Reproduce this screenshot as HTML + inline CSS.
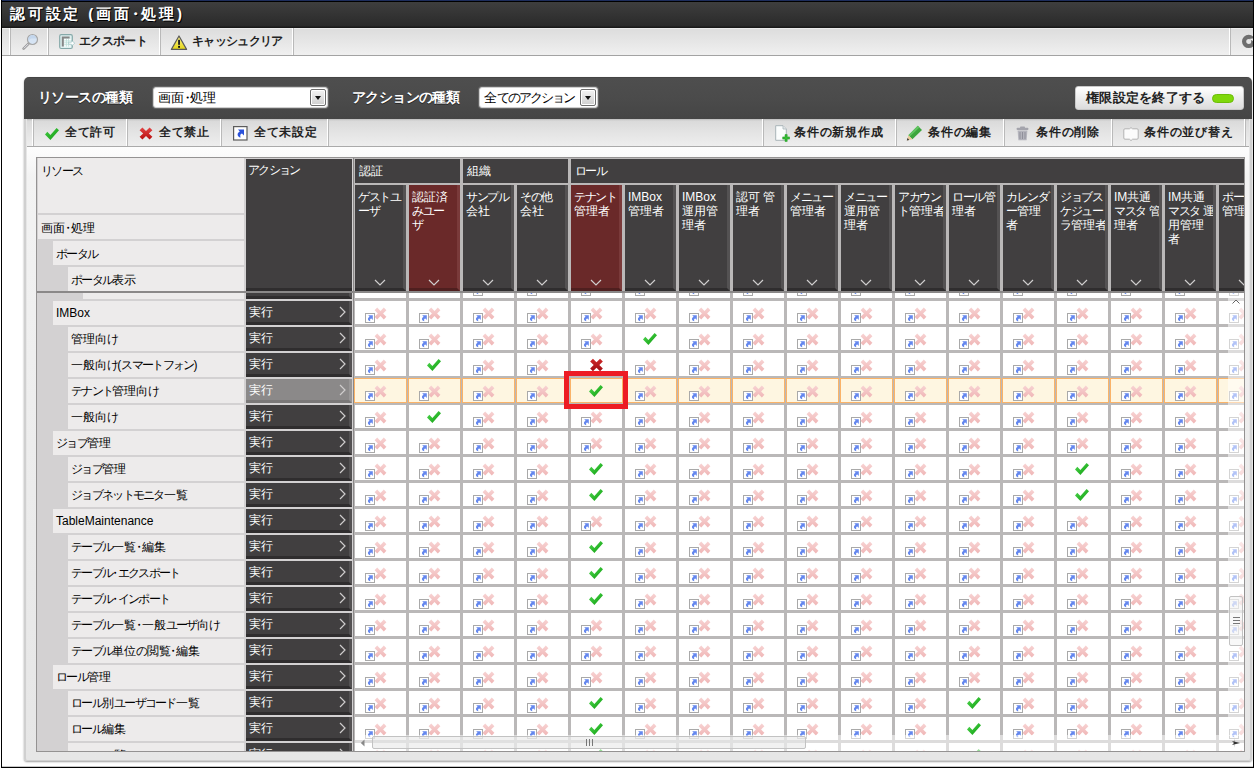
<!DOCTYPE html>
<html lang="ja"><head><meta charset="utf-8"><title>認可設定 (画面・処理)</title>
<style>
*{box-sizing:border-box;margin:0;padding:0}
html,body{width:1254px;height:768px;overflow:hidden;background:#fff}
body{font-family:"Liberation Sans",sans-serif;font-size:12px;color:#000;position:relative}
div,span,svg{position:absolute}
span.i,span.k,span.d{position:static}
span.d{margin:0 -.27em}
span.k{letter-spacing:-1.7px}
.b{letter-spacing:1px}
.b span.k{letter-spacing:-.7px}
#ptool .b span.k{letter-spacing:.4px}
.plabel span.k{letter-spacing:-.6px}
#endbtn span.k,#title span.k{letter-spacing:0}
.sel span.k{letter-spacing:-2px}
.ch span.k{letter-spacing:-1.3px}
#frame{left:0;top:0;width:1254px;height:768px}
#bl{left:1px;top:0;width:1px;height:768px;background:#000}
#bb{left:1px;top:766px;width:1253px;height:2px;background:linear-gradient(rgba(0,0,0,.22) 0,rgba(0,0,0,.22) 1px,#000 1px,#000 2px)}
#br{left:1253px;top:0;width:1px;height:768px;background:#000}
#titlebar{left:2px;top:0;width:1251px;height:28px;background:linear-gradient(#1d2d5c 0,#1d2d5c 1px,#000 1px,#000 2px,#3e3e3e 2px,#343434 14px,#2a2a2a 26px,#191919 27px,#191919 28px)}
#title{left:8px;top:4px;font-size:15px;letter-spacing:2.8px;font-weight:bold;color:#fff;white-space:nowrap;line-height:20px;text-shadow:1px 1px 0 #000;}
#toolbar{left:2px;top:28px;width:1251px;height:28px;background:linear-gradient(#f8f8f8 0,#dddddd 1px,#e6e6e6 50%,#f0f0f0 100%);border-bottom:1px solid #a3a3a3}
.tsep{top:0;width:2px;height:27px;background:#fff;border-right:1px solid #b9b9b9}
.tb{top:0;height:27px;line-height:27px;font-weight:bold;font-size:12px;white-space:nowrap;color:#222;overflow:hidden}
.tb svg{position:absolute}
/* panel */
#panel{left:24px;top:77px;width:1228px;height:684px;background:#e6e6e6;border-radius:5px 5px 3px 3px;box-shadow:0 1px 2px rgba(0,0,0,.38)}
#panel:after{content:'';position:absolute;left:0;top:42px;right:0;bottom:0;border:2px solid #d0d0d0;border-top:0;border-bottom-width:1px;border-radius:0 0 3px 3px;pointer-events:none}
#phead{left:0;top:0;width:1228px;height:42px;background:linear-gradient(#3c3c3c 0,#4e4e4e 1px,#4b4b4b 50%,#454545 100%);border-radius:5px 5px 0 0}
.plabel{top:0;height:41px;line-height:40px;color:#fff;font-weight:bold;font-size:14px;white-space:nowrap;text-shadow:0 1px 0 #222}
.sel{top:10px;height:21px;background:#fff;border:1px solid #cfcfcf;border-radius:3px;font-size:13px;line-height:19px;white-space:nowrap;overflow:hidden;box-shadow:0 0 0 1px #666}
.sel .t{left:4px;top:0}
.sel .dd{right:1px;top:1px;width:16px;height:17px;background:linear-gradient(#f4f4f4,#cfcfcf);border:1px solid #6c6c6c;border-radius:2px;box-shadow:inset 0 0 0 1px #fff}
.sel .dd:after{content:'';position:absolute;left:4px;top:6px;border:3.5px solid transparent;border-top:4px solid #111;border-bottom:0}
#endbtn{left:1051px;top:9px;width:169px;height:24px;border-radius:3px;background:linear-gradient(#ffffff,#dcdcdc);border:1px solid #c9c9c9;font-weight:bold;font-size:13px;letter-spacing:.3px;line-height:22px;color:#222;white-space:nowrap;overflow:hidden}
#endbtn .t{left:10px;top:0}
#endbtn .pill{left:136px;top:7px;width:22px;height:9px;border-radius:5px;background:#7fd80a;border:1px solid #6cbd08}
#ptool .tsep{height:27px}
#ptool .tb{height:27px;line-height:27px}
#ptool svg{margin-top:-.5px}
#ptool{left:3px;top:42px;width:1222px;height:28px;background:linear-gradient(#bdbdbd 0,#dadada 2px,#e4e4e4 50%,#eeeeee 100%);border-bottom:1px solid #aaa}
#pbody{left:3px;top:70px;width:1222px;height:611px;background:linear-gradient(#fdfdfd,#f3f3f3 30px,#e6e6e6 100%)}
/* grid */
#grid{left:36px;top:157px;width:1209px;height:595px;background:#bab8b8;overflow:hidden}
#grid:after{content:'';position:absolute;left:0;top:0;right:0;bottom:0;border:1px solid #949292;pointer-events:none}
#leftbg{left:1px;top:1px;width:209px;height:593px;background:#d3d1d2}
#actbg{left:208px;top:1px;width:110px;height:593px;background:#d3d1d2;border-right:1px solid #8a8888}
.rh{background:#edebeb;padding:6px 0 0 3px;white-space:nowrap;overflow:hidden;line-height:14px}
.ah{background:#413f40;color:#fff;padding:4px 0 0 2px;white-space:nowrap;overflow:hidden;line-height:14px;border-bottom:3px solid #2f2d2e}
.gh{top:2px;height:24px;background:#413f40;color:#fff;padding:5px 0 0 4px;line-height:14px;white-space:nowrap;overflow:hidden}
.ch{top:28px;width:51px;height:106px;background:#413f40;color:#fff;border-right:3px solid #545253;border-bottom:3px solid #2f2d2e;overflow:hidden}
.ch.red{background:#6a2929;border-right-color:#7a3a3a;border-bottom-color:#4f1f1f}
.ch span{left:3px;top:5px;width:60px;line-height:14px;white-space:nowrap}
.chev{left:19px;top:94px;width:12px;height:8px;fill:none;stroke:#d0cece;stroke-width:1.2}
#body{left:0;top:136px;width:1209px;height:459px;overflow:hidden}
#hline{left:0;top:134px;width:1209px;height:2px;background:#8a8888}
.rc{height:24px;background:#edebeb;line-height:24px;padding-left:3px;white-space:nowrap;overflow:hidden}
.ac{width:106px;height:24px;background:#413f40;color:#fff;line-height:23px;padding-left:3px;border-right:3px solid #545253;border-bottom:3px solid #2f2d2e;white-space:nowrap;overflow:hidden}
.ac.hl{background:#8b8989;border-right-color:#9a9898;border-bottom-color:#7a7878}
.gt{left:93px;top:5px;width:8px;height:12px;fill:none;stroke:#cfcdcd;stroke-width:1.2}
.c{width:51px;height:23px;background:#fff;overflow:hidden}
.c.hl{background:#fef6e1;box-shadow:inset 0 0 0 1px #fab368;margin:-1px 0 0 -1px;width:53px;height:25px}
.c.hl .sc,.c.hl .px,.c.hl .mk{margin:1px 0 0 1px}
.sc{left:10px;top:12px;width:10px;height:10px;overflow:visible}
.px{left:18.5px;top:5.5px;width:13px;height:13px;overflow:visible}
.mk{left:18px;top:5px;width:15px;height:14px;overflow:visible}
#redbox{left:564px;top:371px;width:64px;height:38px;border:5px solid #ed1c24}
#vsb{left:1192px;top:136px;width:16px;height:443px;background:rgba(255,255,255,.5)}
#vsb .up{left:4px;top:6px;width:8px;height:5px;fill:none;stroke:#666;stroke-width:1}
#vsb .thumb{left:1px;top:303px;width:14px;height:50px;border:1px solid #c2c2c2;border-radius:2px;background:rgba(240,240,240,.45)}
#vsb .gr{left:3px;top:20px;width:7px;height:7px;background:linear-gradient(#777 0,#777 1px,transparent 1px,transparent 3px,#777 3px,#777 4px,transparent 4px,transparent 6px,#777 6px,#777 7px)}
#hsb{left:319px;top:578px;width:873px;height:16px;background:rgba(255,255,255,.5)}
#hsb .lf{left:5px;top:4px;width:5px;height:8px;fill:#888}
#hsb .thumb{left:17px;top:1px;width:434px;height:13px;border:1px solid #c2c2c2;border-radius:2px;background:rgba(228,228,228,.5)}
#hsb .gr{left:213px;top:2px;width:7px;height:7px;background:linear-gradient(90deg,#777 0,#777 1px,transparent 1px,transparent 3px,#777 3px,#777 4px,transparent 4px,transparent 6px,#777 6px,#777 7px)}
#csb{left:1192px;top:578px;width:16px;height:16px;background:rgba(255,255,255,.5)}
#csb svg{left:3px;top:3px;width:10px;height:10px;fill:#333}

</style></head><body>
<svg width="0" height="0" style="position:absolute;left:-10px;top:-10px">
<defs>
<linearGradient id="gpx" x1="0" y1="0" x2="0" y2="1"><stop offset="0" stop-color="#f7d3d3"/><stop offset="1" stop-color="#f0b6b6"/></linearGradient>
<linearGradient id="gng" x1="0" y1="0" x2="0" y2="1"><stop offset="0" stop-color="#cf2a2a"/><stop offset="1" stop-color="#a00d12"/></linearGradient>
<linearGradient id="gok" x1="0" y1="0" x2="1" y2="1"><stop offset="0" stop-color="#58da58"/><stop offset=".55" stop-color="#2bb82b"/><stop offset="1" stop-color="#119411"/></linearGradient>
<symbol id="sc" viewBox="0 0 10 10" overflow="visible">
<rect x="0.5" y="0.5" width="9" height="9" fill="#fff" stroke="#a9a9a9"/>
<path d="M3.2 2.3 H7.8 V6.9 L6.4 5.6 C5.2 5.7 4.7 6.9 5.4 8.3 C2.5 7.9 2.1 4.8 4.6 3.7 Z" fill="#6487ee"/>
</symbol>
<symbol id="px" viewBox="0 0 13 13" overflow="visible">
<path d="M0.6 3.2 L3.2 0.6 L6.5 3.9 L9.8 0.6 L12.4 3.2 L9.1 6.5 L12.4 9.8 L9.8 12.4 L6.5 9.1 L3.2 12.4 L0.6 9.8 L3.9 6.5 Z" fill="url(#gpx)"/>
</symbol>
<symbol id="ng" viewBox="0 0 13 13" overflow="visible">
<path d="M0.6 3.2 L3.2 0.6 L6.5 3.9 L9.8 0.6 L12.4 3.2 L9.1 6.5 L12.4 9.8 L9.8 12.4 L6.5 9.1 L3.2 12.4 L0.6 9.8 L3.9 6.5 Z" fill="url(#gng)"/>
</symbol>
<symbol id="ok" viewBox="0 0 15 14" overflow="visible">
<path d="M0 7.5 L2.3 4.8 L5.4 7.9 L11.6 0.9 L14 3.2 L5.4 13 Z" fill="url(#gok)"/>
</symbol>
</defs>
</svg>
<div id="frame">
<div id="titlebar"><div id="title">認可設定 (画面<span class="d">・</span>処理)</div></div>
<div id="toolbar">
 <div class="tsep" style="left:7px"></div>
 <div class="tb b" style="left:10px;width:36px">
  <svg style="left:10px;top:5px" width="18" height="18" viewBox="0 0 18 18"><line x1="6.6" y1="10.6" x2="1.6" y2="15.6" stroke="#9c9c9c" stroke-width="2.6" stroke-linecap="round"/><line x1="6.4" y1="10.8" x2="1.8" y2="15.4" stroke="#e4e4ee" stroke-width="1"/><circle cx="10.5" cy="6.5" r="5" fill="#d6e4f4" stroke="#a6a6a6" stroke-width="1.2"/><path d="M6.2 7.5 A4.3 4.3 0 0 1 14.6 5.4 L9 5.6 Z" fill="#c3d6ec"/></svg>
 </div>
 <div class="tsep" style="left:45px"></div>
 <div class="tb b" style="left:48px;width:110px">
  <svg style="left:9px;top:6px" width="17" height="16" viewBox="0 0 17 16"><rect x="0.7" y="0.7" width="12.6" height="13.8" rx="1.5" fill="#dff0f0" stroke="#86a9a9" stroke-width="1.2"/><path d="M2.8 2.6 H10.6 V4.6 H4.8 V12.6 H2.8 Z" fill="#868686"/><path d="M5.2 5 H11.6 V12.6 H5.2 Z" fill="#fff"/><path d="M5.2 6.9 H11.6 M5.2 8.8 H11.6 M5.2 10.7 H11.6 M7.4 5 V12.6 M9.6 5 V12.6" stroke="#b9ddd8" stroke-width="0.8"/><path d="M9.6 8.2 H12.4 V6.4 L15.8 9.2 L12.4 12 V10.2 H9.6 Z" fill="#fff" stroke="#9fc4c4" stroke-width="0.7"/></svg>
  <span style="left:29px"><span class="k">エクスポート</span></span></div>
 <div class="tsep" style="left:157px"></div>
 <div class="tb b" style="left:160px;width:131px">
  <svg style="left:8px;top:7px" width="18" height="16" viewBox="0 0 18 16"><defs><linearGradient id="wg" x1="0" y1="0" x2="0" y2="1"><stop offset="0" stop-color="#fff68c"/><stop offset="1" stop-color="#e3d416"/></linearGradient></defs><path d="M9 1 L16.6 14.4 H1.4 Z" fill="url(#wg)" stroke="#5a5a5a" stroke-width="1.2" stroke-linejoin="round"/><rect x="8.1" y="4.8" width="1.9" height="5" fill="#222"/><rect x="8.1" y="10.9" width="1.9" height="1.9" fill="#111"/></svg>
  <span style="left:30px"><span class="k">キャッシュクリア</span></span></div>
 <div class="tsep" style="left:290px"></div>
 <div class="tsep" style="left:1227px"></div>
 <svg style="left:1239px;top:6px" width="14" height="15" viewBox="0 0 14 15"><circle cx="7.7" cy="7.4" r="4.6" fill="none" stroke="#6e6e6e" stroke-width="4.2"/><path d="M8 5 L14 4 L14 8 Z" fill="#ececec"/></svg>
</div>
<div id="bl"></div><div id="br"></div><div id="bb"></div>
<div id="panel">
 <div id="phead">
  <div class="plabel" style="left:14px"><span class="k">リソースの</span>種類</div>
  <div class="sel" style="left:129px;width:175px"><span class="t">画面<span class="d">・</span>処理</span><span class="dd"></span></div>
  <div class="plabel" style="left:328px"><span class="k">アクションの</span>種類</div>
  <div class="sel" style="left:455px;width:119px"><span class="t">全<span class="k">てのアクション</span></span><span class="dd"></span></div>
  <div id="endbtn"><span class="t">権限設定<span class="k">を</span>終了<span class="k">する</span></span><span class="pill"></span></div>
 </div>
 <div id="ptool">
  <div class="tsep" style="left:5px"></div>
  <div class="tb b" style="left:9px;width:92px">
   <svg style="left:9px;top:8px" width="15" height="13" viewBox="0 0 15 13"><defs><linearGradient id="gg" x1="0" y1="0" x2="1" y2="1"><stop offset="0" stop-color="#45cf45"/><stop offset="1" stop-color="#139a13"/></linearGradient></defs><path d="M0 7.5 L2.3 4.8 L5.4 7.9 L11.6 0.9 L14 3.2 L5.4 13 Z" fill="url(#gg)"/></svg>
   <span style="left:29px">全<span class="k">て</span>許可</span></div>
  <div class="tsep" style="left:99px"></div>
  <div class="tb b" style="left:103px;width:92px">
   <svg style="left:9px;top:8px" width="14" height="13" viewBox="0 0 14 13"><defs><linearGradient id="rg" x1="0" y1="0" x2="0" y2="1"><stop offset="0" stop-color="#e24444"/><stop offset="1" stop-color="#b80f0f"/></linearGradient></defs><path d="M0.6 3.2 L3.4 0.6 L7 3.9 L10.6 0.6 L13.4 3.2 L9.8 6.5 L13.4 9.8 L10.6 12.4 L7 9.1 L3.4 12.4 L0.6 9.8 L4.2 6.5 Z" fill="url(#rg)"/></svg>
   <span style="left:29px">全<span class="k">て</span>禁止</span></div>
  <div class="tsep" style="left:193px"></div>
  <div class="tb b" style="left:197px;width:104px">
   <svg style="left:9px;top:7px" width="15" height="15" viewBox="0 0 15 15"><rect x="0.6" y="0.6" width="13.4" height="13.4" fill="#fff" stroke="#5c5c5c" stroke-width="1.2"/><path d="M5 3.4 H11 V9.4 L9 7.6 C7.4 7.8 6.8 9.4 7.6 11.6 C4 10.8 3.6 6.8 6.8 5.4 Z" fill="#2b52db"/></svg>
   <span style="left:30px">全<span class="k">て</span>未設定</span></div>
  <div class="tsep" style="left:300px"></div>
  <div class="tsep" style="left:735px"></div>
  <div class="tb b" style="left:738px;width:132px">
   <svg style="left:10px;top:6px" width="16" height="17" viewBox="0 0 16 17"><path d="M0.7 0.7 H8 L11.3 4 V15.3 H0.7 Z" fill="#fbfdfd" stroke="#a9b4b8" stroke-width="1"/><path d="M8 0.7 V4 H11.3" fill="#e4eaec" stroke="#a9b4b8" stroke-width="0.8"/><path d="M10 9.6 H12.2 V11.9 H14.5 V14.1 H12.2 V16.4 H10 V14.1 H7.7 V11.9 H10 Z" fill="#35bb35" stroke="#1c951c" stroke-width="0.5"/></svg>
   <span style="left:29px">条件<span class="k">の</span>新規作成</span></div>
  <div class="tsep" style="left:868px"></div>
  <div class="tb b" style="left:871px;width:107px">
   <svg style="left:8px;top:6px" width="17" height="16" viewBox="0 0 17 16"><path d="M11.8 0.8 L16 5 L6.4 14.2 L2.4 10.2 Z" fill="#3da63d"/><path d="M11.8 0.8 L13.4 2.4 L3.8 11.6 L2.4 10.2 Z" fill="#62c462"/><path d="M2.4 10.2 L6.4 14.2 L0.8 15.6 Z" fill="#e9c99a"/><path d="M0.8 15.6 L1.5 13 L3.2 14.9 Z" fill="#333"/></svg>
   <span style="left:30px">条件<span class="k">の</span>編集</span></div>
  <div class="tsep" style="left:976px"></div>
  <div class="tb b" style="left:979px;width:107px">
   <svg style="left:10px;top:7px" width="13" height="15" viewBox="0 0 13 15"><rect x="4" y="0.4" width="5" height="2" rx="0.8" fill="#a4a4ac"/><rect x="0.6" y="1.8" width="11.8" height="2.2" rx="0.8" fill="#a4a4ac"/><path d="M1.6 4.6 H11.4 L10.6 14.2 H2.4 Z" fill="#b4b4bc"/><path d="M4 6 V13 M6.5 6 V13 M9 6 V13" stroke="#8c8c96" stroke-width="0.9"/></svg>
   <span style="left:30px">条件<span class="k">の</span>削除</span></div>
  <div class="tsep" style="left:1084px"></div>
  <div class="tb b" style="left:1087px;width:132px">
   <svg style="left:9px;top:8px" width="16" height="14" viewBox="0 0 16 14"><path d="M2 1.8 H6.4 L8 0.6 L9.6 1.8 H14 Q15.2 1.8 15.2 3 V11 Q15.2 12.2 14 12.2 H9.6 L8 13.6 L6.4 12.2 H2 Q0.8 12.2 0.8 11 V3 Q0.8 1.8 2 1.8 Z" fill="#fbfbfb" stroke="#b2b2b2" stroke-width="1"/></svg>
   <span style="left:30px">条件<span class="k">の</span>並<span class="k">び</span>替<span class="k">え</span></span></div>
  <div class="tsep" style="left:1217px"></div>
 </div>
 <div id="pbody"></div>
</div>
<div id="grid">
<div id="leftbg"></div><div id="actbg"></div>
<div class="rh" style="left:2px;top:1px;width:206px;height:55px"><span class="k">リソース</span></div>
<div class="rh" style="left:2px;top:58px;width:206px;height:24px">画面<span class="d">・</span>処理</div>
<div class="rh" style="left:17px;top:84px;width:191px;height:24px"><span class="k">ポータル</span></div>
<div class="rh" style="left:32px;top:110px;width:176px;height:24px"><span class="k">ポータル</span>表示</div>
<div class="ah" style="left:210px;top:2px;width:106px;height:132px"><span class="k">アクション</span></div>
<div class="gh" style="left:319px;width:105px">認証</div>
<div class="gh" style="left:427px;width:105px">組織</div>
<div class="gh" style="left:535px;width:680px"><span class="k">ロール</span></div>
<div class="ch" style="left:319px"><span><span class="k">ゲストユ</span><br><span class="k">ーザ</span></span><svg class="chev" viewBox="0 0 12 8"><path d="M1 1 L6 6 L11 1"/></svg></div>
<div class="ch red" style="left:373px"><span>認証済<br><span class="k">みユー</span><br><span class="k">ザ</span></span><svg class="chev" viewBox="0 0 12 8"><path d="M1 1 L6 6 L11 1"/></svg></div>
<div class="ch" style="left:427px"><span><span class="k">サンプル</span><br>会社</span><svg class="chev" viewBox="0 0 12 8"><path d="M1 1 L6 6 L11 1"/></svg></div>
<div class="ch" style="left:481px"><span><span class="k">その</span>他<br>会社</span><svg class="chev" viewBox="0 0 12 8"><path d="M1 1 L6 6 L11 1"/></svg></div>
<div class="ch red" style="left:535px"><span><span class="k">テナント</span><br>管理者</span><svg class="chev" viewBox="0 0 12 8"><path d="M1 1 L6 6 L11 1"/></svg></div>
<div class="ch" style="left:589px"><span>IMBox<br>管理者</span><svg class="chev" viewBox="0 0 12 8"><path d="M1 1 L6 6 L11 1"/></svg></div>
<div class="ch" style="left:643px"><span>IMBox<br>運用管<br>理者</span><svg class="chev" viewBox="0 0 12 8"><path d="M1 1 L6 6 L11 1"/></svg></div>
<div class="ch" style="left:697px"><span>認可 管<br>理者</span><svg class="chev" viewBox="0 0 12 8"><path d="M1 1 L6 6 L11 1"/></svg></div>
<div class="ch" style="left:751px"><span><span class="k">メニュー</span><br>管理者</span><svg class="chev" viewBox="0 0 12 8"><path d="M1 1 L6 6 L11 1"/></svg></div>
<div class="ch" style="left:805px"><span><span class="k">メニュー</span><br>運用管<br>理者</span><svg class="chev" viewBox="0 0 12 8"><path d="M1 1 L6 6 L11 1"/></svg></div>
<div class="ch" style="left:859px"><span><span class="k">アカウン</span><br><span class="k">ト</span>管理者</span><svg class="chev" viewBox="0 0 12 8"><path d="M1 1 L6 6 L11 1"/></svg></div>
<div class="ch" style="left:913px"><span><span class="k">ロール</span>管<br>理者</span><svg class="chev" viewBox="0 0 12 8"><path d="M1 1 L6 6 L11 1"/></svg></div>
<div class="ch" style="left:967px"><span><span class="k">カレンダ</span><br><span class="k">ー</span>管理<br>者</span><svg class="chev" viewBox="0 0 12 8"><path d="M1 1 L6 6 L11 1"/></svg></div>
<div class="ch" style="left:1021px"><span><span class="k">ジョブス</span><br><span class="k">ケジュー</span><br><span class="k">ラ</span>管理者</span><svg class="chev" viewBox="0 0 12 8"><path d="M1 1 L6 6 L11 1"/></svg></div>
<div class="ch" style="left:1075px"><span>IM共通<br><span class="k">マスタ</span> 管<br>理者</span><svg class="chev" viewBox="0 0 12 8"><path d="M1 1 L6 6 L11 1"/></svg></div>
<div class="ch" style="left:1129px"><span>IM共通<br><span class="k">マスタ</span> 運<br>用管理<br>者</span><svg class="chev" viewBox="0 0 12 8"><path d="M1 1 L6 6 L11 1"/></svg></div>
<div class="ch" style="left:1183px"><span><span class="k">ポー</span><br>管理</span><svg class="chev" viewBox="0 0 12 8"><path d="M1 1 L6 6 L11 1"/></svg></div>
<div id="hline"></div>
<div id="body">
<div class="tree-strip" style="left:2px;top:0;width:206px;height:6px"></div>
<div class="rc" style="left:47px;top:0;width:161px;height:6px"></div>
<div class="ac" style="left:210px;top:0;width:106px;height:6px"></div>
<div class="c" style="left:319px;top:0;height:5px"></div>
<div class="c" style="left:373px;top:0;height:5px"></div>
<div class="c" style="left:427px;top:0;height:5px"><svg class="sc" style="top:-7px"><use href="#sc"/></svg></div>
<div class="c" style="left:481px;top:0;height:5px"><svg class="sc" style="top:-7px"><use href="#sc"/></svg></div>
<div class="c" style="left:535px;top:0;height:5px"><svg class="sc" style="top:-7px"><use href="#sc"/></svg></div>
<div class="c" style="left:589px;top:0;height:5px"><svg class="sc" style="top:-7px"><use href="#sc"/></svg></div>
<div class="c" style="left:643px;top:0;height:5px"><svg class="sc" style="top:-7px"><use href="#sc"/></svg></div>
<div class="c" style="left:697px;top:0;height:5px"><svg class="sc" style="top:-7px"><use href="#sc"/></svg></div>
<div class="c" style="left:751px;top:0;height:5px"><svg class="sc" style="top:-7px"><use href="#sc"/></svg></div>
<div class="c" style="left:805px;top:0;height:5px"><svg class="sc" style="top:-7px"><use href="#sc"/></svg></div>
<div class="c" style="left:859px;top:0;height:5px"><svg class="sc" style="top:-7px"><use href="#sc"/></svg></div>
<div class="c" style="left:913px;top:0;height:5px"><svg class="sc" style="top:-7px"><use href="#sc"/></svg></div>
<div class="c" style="left:967px;top:0;height:5px"><svg class="sc" style="top:-7px"><use href="#sc"/></svg></div>
<div class="c" style="left:1021px;top:0;height:5px"><svg class="sc" style="top:-7px"><use href="#sc"/></svg></div>
<div class="c" style="left:1075px;top:0;height:5px"><svg class="sc" style="top:-7px"><use href="#sc"/></svg></div>
<div class="c" style="left:1129px;top:0;height:5px"><svg class="sc" style="top:-7px"><use href="#sc"/></svg></div>
<div class="c" style="left:1183px;top:0;height:5px"><svg class="sc" style="top:-7px"><use href="#sc"/></svg></div>
<div class="rc" style="left:17px;top:8px;width:191px">IMBox</div>
<div class="ac" style="left:210px;top:8px">実行<svg class="gt" viewBox="0 0 8 12"><path d="M1 1 L6 6 L1 11"/></svg></div>
<div class="c" style="left:319px;top:8px"><svg class="sc"><use href="#sc"/></svg><svg class="px"><use href="#px"/></svg></div>
<div class="c" style="left:373px;top:8px"><svg class="sc"><use href="#sc"/></svg><svg class="px"><use href="#px"/></svg></div>
<div class="c" style="left:427px;top:8px"><svg class="sc"><use href="#sc"/></svg><svg class="px"><use href="#px"/></svg></div>
<div class="c" style="left:481px;top:8px"><svg class="sc"><use href="#sc"/></svg><svg class="px"><use href="#px"/></svg></div>
<div class="c" style="left:535px;top:8px"><svg class="sc"><use href="#sc"/></svg><svg class="px"><use href="#px"/></svg></div>
<div class="c" style="left:589px;top:8px"><svg class="sc"><use href="#sc"/></svg><svg class="px"><use href="#px"/></svg></div>
<div class="c" style="left:643px;top:8px"><svg class="sc"><use href="#sc"/></svg><svg class="px"><use href="#px"/></svg></div>
<div class="c" style="left:697px;top:8px"><svg class="sc"><use href="#sc"/></svg><svg class="px"><use href="#px"/></svg></div>
<div class="c" style="left:751px;top:8px"><svg class="sc"><use href="#sc"/></svg><svg class="px"><use href="#px"/></svg></div>
<div class="c" style="left:805px;top:8px"><svg class="sc"><use href="#sc"/></svg><svg class="px"><use href="#px"/></svg></div>
<div class="c" style="left:859px;top:8px"><svg class="sc"><use href="#sc"/></svg><svg class="px"><use href="#px"/></svg></div>
<div class="c" style="left:913px;top:8px"><svg class="sc"><use href="#sc"/></svg><svg class="px"><use href="#px"/></svg></div>
<div class="c" style="left:967px;top:8px"><svg class="sc"><use href="#sc"/></svg><svg class="px"><use href="#px"/></svg></div>
<div class="c" style="left:1021px;top:8px"><svg class="sc"><use href="#sc"/></svg><svg class="px"><use href="#px"/></svg></div>
<div class="c" style="left:1075px;top:8px"><svg class="sc"><use href="#sc"/></svg><svg class="px"><use href="#px"/></svg></div>
<div class="c" style="left:1129px;top:8px"><svg class="sc"><use href="#sc"/></svg><svg class="px"><use href="#px"/></svg></div>
<div class="c" style="left:1183px;top:8px"><svg class="sc"><use href="#sc"/></svg><svg class="px"><use href="#px"/></svg></div>
<div class="rc" style="left:32px;top:34px;width:176px">管理向<span class="k">け</span></div>
<div class="ac" style="left:210px;top:34px">実行<svg class="gt" viewBox="0 0 8 12"><path d="M1 1 L6 6 L1 11"/></svg></div>
<div class="c" style="left:319px;top:34px"><svg class="sc"><use href="#sc"/></svg><svg class="px"><use href="#px"/></svg></div>
<div class="c" style="left:373px;top:34px"><svg class="sc"><use href="#sc"/></svg><svg class="px"><use href="#px"/></svg></div>
<div class="c" style="left:427px;top:34px"><svg class="sc"><use href="#sc"/></svg><svg class="px"><use href="#px"/></svg></div>
<div class="c" style="left:481px;top:34px"><svg class="sc"><use href="#sc"/></svg><svg class="px"><use href="#px"/></svg></div>
<div class="c" style="left:535px;top:34px"><svg class="sc"><use href="#sc"/></svg><svg class="px"><use href="#px"/></svg></div>
<div class="c" style="left:589px;top:34px"><svg class="mk"><use href="#ok"/></svg></div>
<div class="c" style="left:643px;top:34px"><svg class="sc"><use href="#sc"/></svg><svg class="px"><use href="#px"/></svg></div>
<div class="c" style="left:697px;top:34px"><svg class="sc"><use href="#sc"/></svg><svg class="px"><use href="#px"/></svg></div>
<div class="c" style="left:751px;top:34px"><svg class="sc"><use href="#sc"/></svg><svg class="px"><use href="#px"/></svg></div>
<div class="c" style="left:805px;top:34px"><svg class="sc"><use href="#sc"/></svg><svg class="px"><use href="#px"/></svg></div>
<div class="c" style="left:859px;top:34px"><svg class="sc"><use href="#sc"/></svg><svg class="px"><use href="#px"/></svg></div>
<div class="c" style="left:913px;top:34px"><svg class="sc"><use href="#sc"/></svg><svg class="px"><use href="#px"/></svg></div>
<div class="c" style="left:967px;top:34px"><svg class="sc"><use href="#sc"/></svg><svg class="px"><use href="#px"/></svg></div>
<div class="c" style="left:1021px;top:34px"><svg class="sc"><use href="#sc"/></svg><svg class="px"><use href="#px"/></svg></div>
<div class="c" style="left:1075px;top:34px"><svg class="sc"><use href="#sc"/></svg><svg class="px"><use href="#px"/></svg></div>
<div class="c" style="left:1129px;top:34px"><svg class="sc"><use href="#sc"/></svg><svg class="px"><use href="#px"/></svg></div>
<div class="c" style="left:1183px;top:34px"><svg class="sc"><use href="#sc"/></svg><svg class="px"><use href="#px"/></svg></div>
<div class="rc" style="left:32px;top:60px;width:176px">一般向<span class="k">け</span>(<span class="k">スマートフォン</span>)</div>
<div class="ac" style="left:210px;top:60px">実行<svg class="gt" viewBox="0 0 8 12"><path d="M1 1 L6 6 L1 11"/></svg></div>
<div class="c" style="left:319px;top:60px"><svg class="sc"><use href="#sc"/></svg><svg class="px"><use href="#px"/></svg></div>
<div class="c" style="left:373px;top:60px"><svg class="mk"><use href="#ok"/></svg></div>
<div class="c" style="left:427px;top:60px"><svg class="sc"><use href="#sc"/></svg><svg class="px"><use href="#px"/></svg></div>
<div class="c" style="left:481px;top:60px"><svg class="sc"><use href="#sc"/></svg><svg class="px"><use href="#px"/></svg></div>
<div class="c" style="left:535px;top:60px"><svg class="mk"><use href="#ng"/></svg></div>
<div class="c" style="left:589px;top:60px"><svg class="sc"><use href="#sc"/></svg><svg class="px"><use href="#px"/></svg></div>
<div class="c" style="left:643px;top:60px"><svg class="sc"><use href="#sc"/></svg><svg class="px"><use href="#px"/></svg></div>
<div class="c" style="left:697px;top:60px"><svg class="sc"><use href="#sc"/></svg><svg class="px"><use href="#px"/></svg></div>
<div class="c" style="left:751px;top:60px"><svg class="sc"><use href="#sc"/></svg><svg class="px"><use href="#px"/></svg></div>
<div class="c" style="left:805px;top:60px"><svg class="sc"><use href="#sc"/></svg><svg class="px"><use href="#px"/></svg></div>
<div class="c" style="left:859px;top:60px"><svg class="sc"><use href="#sc"/></svg><svg class="px"><use href="#px"/></svg></div>
<div class="c" style="left:913px;top:60px"><svg class="sc"><use href="#sc"/></svg><svg class="px"><use href="#px"/></svg></div>
<div class="c" style="left:967px;top:60px"><svg class="sc"><use href="#sc"/></svg><svg class="px"><use href="#px"/></svg></div>
<div class="c" style="left:1021px;top:60px"><svg class="sc"><use href="#sc"/></svg><svg class="px"><use href="#px"/></svg></div>
<div class="c" style="left:1075px;top:60px"><svg class="sc"><use href="#sc"/></svg><svg class="px"><use href="#px"/></svg></div>
<div class="c" style="left:1129px;top:60px"><svg class="sc"><use href="#sc"/></svg><svg class="px"><use href="#px"/></svg></div>
<div class="c" style="left:1183px;top:60px"><svg class="sc"><use href="#sc"/></svg><svg class="px"><use href="#px"/></svg></div>
<div class="rc" style="left:32px;top:86px;width:176px"><span class="k">テナント</span>管理向<span class="k">け</span></div>
<div class="ac hl" style="left:210px;top:86px">実行<svg class="gt" viewBox="0 0 8 12"><path d="M1 1 L6 6 L1 11"/></svg></div>
<div class="c hl" style="left:319px;top:86px"><svg class="sc"><use href="#sc"/></svg><svg class="px"><use href="#px"/></svg></div>
<div class="c hl" style="left:373px;top:86px"><svg class="sc"><use href="#sc"/></svg><svg class="px"><use href="#px"/></svg></div>
<div class="c hl" style="left:427px;top:86px"><svg class="sc"><use href="#sc"/></svg><svg class="px"><use href="#px"/></svg></div>
<div class="c hl" style="left:481px;top:86px"><svg class="sc"><use href="#sc"/></svg><svg class="px"><use href="#px"/></svg></div>
<div class="c hl" style="left:535px;top:86px"><svg class="mk"><use href="#ok"/></svg></div>
<div class="c hl" style="left:589px;top:86px"><svg class="sc"><use href="#sc"/></svg><svg class="px"><use href="#px"/></svg></div>
<div class="c hl" style="left:643px;top:86px"><svg class="sc"><use href="#sc"/></svg><svg class="px"><use href="#px"/></svg></div>
<div class="c hl" style="left:697px;top:86px"><svg class="sc"><use href="#sc"/></svg><svg class="px"><use href="#px"/></svg></div>
<div class="c hl" style="left:751px;top:86px"><svg class="sc"><use href="#sc"/></svg><svg class="px"><use href="#px"/></svg></div>
<div class="c hl" style="left:805px;top:86px"><svg class="sc"><use href="#sc"/></svg><svg class="px"><use href="#px"/></svg></div>
<div class="c hl" style="left:859px;top:86px"><svg class="sc"><use href="#sc"/></svg><svg class="px"><use href="#px"/></svg></div>
<div class="c hl" style="left:913px;top:86px"><svg class="sc"><use href="#sc"/></svg><svg class="px"><use href="#px"/></svg></div>
<div class="c hl" style="left:967px;top:86px"><svg class="sc"><use href="#sc"/></svg><svg class="px"><use href="#px"/></svg></div>
<div class="c hl" style="left:1021px;top:86px"><svg class="sc"><use href="#sc"/></svg><svg class="px"><use href="#px"/></svg></div>
<div class="c hl" style="left:1075px;top:86px"><svg class="sc"><use href="#sc"/></svg><svg class="px"><use href="#px"/></svg></div>
<div class="c hl" style="left:1129px;top:86px"><svg class="sc"><use href="#sc"/></svg><svg class="px"><use href="#px"/></svg></div>
<div class="c hl" style="left:1183px;top:86px"><svg class="sc"><use href="#sc"/></svg><svg class="px"><use href="#px"/></svg></div>
<div class="rc" style="left:32px;top:112px;width:176px">一般向<span class="k">け</span></div>
<div class="ac" style="left:210px;top:112px">実行<svg class="gt" viewBox="0 0 8 12"><path d="M1 1 L6 6 L1 11"/></svg></div>
<div class="c" style="left:319px;top:112px"><svg class="sc"><use href="#sc"/></svg><svg class="px"><use href="#px"/></svg></div>
<div class="c" style="left:373px;top:112px"><svg class="mk"><use href="#ok"/></svg></div>
<div class="c" style="left:427px;top:112px"><svg class="sc"><use href="#sc"/></svg><svg class="px"><use href="#px"/></svg></div>
<div class="c" style="left:481px;top:112px"><svg class="sc"><use href="#sc"/></svg><svg class="px"><use href="#px"/></svg></div>
<div class="c" style="left:535px;top:112px"><svg class="sc"><use href="#sc"/></svg><svg class="px"><use href="#px"/></svg></div>
<div class="c" style="left:589px;top:112px"><svg class="sc"><use href="#sc"/></svg><svg class="px"><use href="#px"/></svg></div>
<div class="c" style="left:643px;top:112px"><svg class="sc"><use href="#sc"/></svg><svg class="px"><use href="#px"/></svg></div>
<div class="c" style="left:697px;top:112px"><svg class="sc"><use href="#sc"/></svg><svg class="px"><use href="#px"/></svg></div>
<div class="c" style="left:751px;top:112px"><svg class="sc"><use href="#sc"/></svg><svg class="px"><use href="#px"/></svg></div>
<div class="c" style="left:805px;top:112px"><svg class="sc"><use href="#sc"/></svg><svg class="px"><use href="#px"/></svg></div>
<div class="c" style="left:859px;top:112px"><svg class="sc"><use href="#sc"/></svg><svg class="px"><use href="#px"/></svg></div>
<div class="c" style="left:913px;top:112px"><svg class="sc"><use href="#sc"/></svg><svg class="px"><use href="#px"/></svg></div>
<div class="c" style="left:967px;top:112px"><svg class="sc"><use href="#sc"/></svg><svg class="px"><use href="#px"/></svg></div>
<div class="c" style="left:1021px;top:112px"><svg class="sc"><use href="#sc"/></svg><svg class="px"><use href="#px"/></svg></div>
<div class="c" style="left:1075px;top:112px"><svg class="sc"><use href="#sc"/></svg><svg class="px"><use href="#px"/></svg></div>
<div class="c" style="left:1129px;top:112px"><svg class="sc"><use href="#sc"/></svg><svg class="px"><use href="#px"/></svg></div>
<div class="c" style="left:1183px;top:112px"><svg class="sc"><use href="#sc"/></svg><svg class="px"><use href="#px"/></svg></div>
<div class="rc" style="left:17px;top:138px;width:191px"><span class="k">ジョブ</span>管理</div>
<div class="ac" style="left:210px;top:138px">実行<svg class="gt" viewBox="0 0 8 12"><path d="M1 1 L6 6 L1 11"/></svg></div>
<div class="c" style="left:319px;top:138px"><svg class="sc"><use href="#sc"/></svg><svg class="px"><use href="#px"/></svg></div>
<div class="c" style="left:373px;top:138px"><svg class="sc"><use href="#sc"/></svg><svg class="px"><use href="#px"/></svg></div>
<div class="c" style="left:427px;top:138px"><svg class="sc"><use href="#sc"/></svg><svg class="px"><use href="#px"/></svg></div>
<div class="c" style="left:481px;top:138px"><svg class="sc"><use href="#sc"/></svg><svg class="px"><use href="#px"/></svg></div>
<div class="c" style="left:535px;top:138px"><svg class="sc"><use href="#sc"/></svg><svg class="px"><use href="#px"/></svg></div>
<div class="c" style="left:589px;top:138px"><svg class="sc"><use href="#sc"/></svg><svg class="px"><use href="#px"/></svg></div>
<div class="c" style="left:643px;top:138px"><svg class="sc"><use href="#sc"/></svg><svg class="px"><use href="#px"/></svg></div>
<div class="c" style="left:697px;top:138px"><svg class="sc"><use href="#sc"/></svg><svg class="px"><use href="#px"/></svg></div>
<div class="c" style="left:751px;top:138px"><svg class="sc"><use href="#sc"/></svg><svg class="px"><use href="#px"/></svg></div>
<div class="c" style="left:805px;top:138px"><svg class="sc"><use href="#sc"/></svg><svg class="px"><use href="#px"/></svg></div>
<div class="c" style="left:859px;top:138px"><svg class="sc"><use href="#sc"/></svg><svg class="px"><use href="#px"/></svg></div>
<div class="c" style="left:913px;top:138px"><svg class="sc"><use href="#sc"/></svg><svg class="px"><use href="#px"/></svg></div>
<div class="c" style="left:967px;top:138px"><svg class="sc"><use href="#sc"/></svg><svg class="px"><use href="#px"/></svg></div>
<div class="c" style="left:1021px;top:138px"><svg class="sc"><use href="#sc"/></svg><svg class="px"><use href="#px"/></svg></div>
<div class="c" style="left:1075px;top:138px"><svg class="sc"><use href="#sc"/></svg><svg class="px"><use href="#px"/></svg></div>
<div class="c" style="left:1129px;top:138px"><svg class="sc"><use href="#sc"/></svg><svg class="px"><use href="#px"/></svg></div>
<div class="c" style="left:1183px;top:138px"><svg class="sc"><use href="#sc"/></svg><svg class="px"><use href="#px"/></svg></div>
<div class="rc" style="left:32px;top:164px;width:176px"><span class="k">ジョブ</span>管理</div>
<div class="ac" style="left:210px;top:164px">実行<svg class="gt" viewBox="0 0 8 12"><path d="M1 1 L6 6 L1 11"/></svg></div>
<div class="c" style="left:319px;top:164px"><svg class="sc"><use href="#sc"/></svg><svg class="px"><use href="#px"/></svg></div>
<div class="c" style="left:373px;top:164px"><svg class="sc"><use href="#sc"/></svg><svg class="px"><use href="#px"/></svg></div>
<div class="c" style="left:427px;top:164px"><svg class="sc"><use href="#sc"/></svg><svg class="px"><use href="#px"/></svg></div>
<div class="c" style="left:481px;top:164px"><svg class="sc"><use href="#sc"/></svg><svg class="px"><use href="#px"/></svg></div>
<div class="c" style="left:535px;top:164px"><svg class="mk"><use href="#ok"/></svg></div>
<div class="c" style="left:589px;top:164px"><svg class="sc"><use href="#sc"/></svg><svg class="px"><use href="#px"/></svg></div>
<div class="c" style="left:643px;top:164px"><svg class="sc"><use href="#sc"/></svg><svg class="px"><use href="#px"/></svg></div>
<div class="c" style="left:697px;top:164px"><svg class="sc"><use href="#sc"/></svg><svg class="px"><use href="#px"/></svg></div>
<div class="c" style="left:751px;top:164px"><svg class="sc"><use href="#sc"/></svg><svg class="px"><use href="#px"/></svg></div>
<div class="c" style="left:805px;top:164px"><svg class="sc"><use href="#sc"/></svg><svg class="px"><use href="#px"/></svg></div>
<div class="c" style="left:859px;top:164px"><svg class="sc"><use href="#sc"/></svg><svg class="px"><use href="#px"/></svg></div>
<div class="c" style="left:913px;top:164px"><svg class="sc"><use href="#sc"/></svg><svg class="px"><use href="#px"/></svg></div>
<div class="c" style="left:967px;top:164px"><svg class="sc"><use href="#sc"/></svg><svg class="px"><use href="#px"/></svg></div>
<div class="c" style="left:1021px;top:164px"><svg class="mk"><use href="#ok"/></svg></div>
<div class="c" style="left:1075px;top:164px"><svg class="sc"><use href="#sc"/></svg><svg class="px"><use href="#px"/></svg></div>
<div class="c" style="left:1129px;top:164px"><svg class="sc"><use href="#sc"/></svg><svg class="px"><use href="#px"/></svg></div>
<div class="c" style="left:1183px;top:164px"><svg class="sc"><use href="#sc"/></svg><svg class="px"><use href="#px"/></svg></div>
<div class="rc" style="left:32px;top:190px;width:176px"><span class="k">ジョブネットモニタ</span>一覧</div>
<div class="ac" style="left:210px;top:190px">実行<svg class="gt" viewBox="0 0 8 12"><path d="M1 1 L6 6 L1 11"/></svg></div>
<div class="c" style="left:319px;top:190px"><svg class="sc"><use href="#sc"/></svg><svg class="px"><use href="#px"/></svg></div>
<div class="c" style="left:373px;top:190px"><svg class="sc"><use href="#sc"/></svg><svg class="px"><use href="#px"/></svg></div>
<div class="c" style="left:427px;top:190px"><svg class="sc"><use href="#sc"/></svg><svg class="px"><use href="#px"/></svg></div>
<div class="c" style="left:481px;top:190px"><svg class="sc"><use href="#sc"/></svg><svg class="px"><use href="#px"/></svg></div>
<div class="c" style="left:535px;top:190px"><svg class="mk"><use href="#ok"/></svg></div>
<div class="c" style="left:589px;top:190px"><svg class="sc"><use href="#sc"/></svg><svg class="px"><use href="#px"/></svg></div>
<div class="c" style="left:643px;top:190px"><svg class="sc"><use href="#sc"/></svg><svg class="px"><use href="#px"/></svg></div>
<div class="c" style="left:697px;top:190px"><svg class="sc"><use href="#sc"/></svg><svg class="px"><use href="#px"/></svg></div>
<div class="c" style="left:751px;top:190px"><svg class="sc"><use href="#sc"/></svg><svg class="px"><use href="#px"/></svg></div>
<div class="c" style="left:805px;top:190px"><svg class="sc"><use href="#sc"/></svg><svg class="px"><use href="#px"/></svg></div>
<div class="c" style="left:859px;top:190px"><svg class="sc"><use href="#sc"/></svg><svg class="px"><use href="#px"/></svg></div>
<div class="c" style="left:913px;top:190px"><svg class="sc"><use href="#sc"/></svg><svg class="px"><use href="#px"/></svg></div>
<div class="c" style="left:967px;top:190px"><svg class="sc"><use href="#sc"/></svg><svg class="px"><use href="#px"/></svg></div>
<div class="c" style="left:1021px;top:190px"><svg class="mk"><use href="#ok"/></svg></div>
<div class="c" style="left:1075px;top:190px"><svg class="sc"><use href="#sc"/></svg><svg class="px"><use href="#px"/></svg></div>
<div class="c" style="left:1129px;top:190px"><svg class="sc"><use href="#sc"/></svg><svg class="px"><use href="#px"/></svg></div>
<div class="c" style="left:1183px;top:190px"><svg class="sc"><use href="#sc"/></svg><svg class="px"><use href="#px"/></svg></div>
<div class="rc" style="left:17px;top:216px;width:191px">TableMaintenance</div>
<div class="ac" style="left:210px;top:216px">実行<svg class="gt" viewBox="0 0 8 12"><path d="M1 1 L6 6 L1 11"/></svg></div>
<div class="c" style="left:319px;top:216px"><svg class="sc"><use href="#sc"/></svg><svg class="px"><use href="#px"/></svg></div>
<div class="c" style="left:373px;top:216px"><svg class="sc"><use href="#sc"/></svg><svg class="px"><use href="#px"/></svg></div>
<div class="c" style="left:427px;top:216px"><svg class="sc"><use href="#sc"/></svg><svg class="px"><use href="#px"/></svg></div>
<div class="c" style="left:481px;top:216px"><svg class="sc"><use href="#sc"/></svg><svg class="px"><use href="#px"/></svg></div>
<div class="c" style="left:535px;top:216px"><svg class="sc"><use href="#sc"/></svg><svg class="px"><use href="#px"/></svg></div>
<div class="c" style="left:589px;top:216px"><svg class="sc"><use href="#sc"/></svg><svg class="px"><use href="#px"/></svg></div>
<div class="c" style="left:643px;top:216px"><svg class="sc"><use href="#sc"/></svg><svg class="px"><use href="#px"/></svg></div>
<div class="c" style="left:697px;top:216px"><svg class="sc"><use href="#sc"/></svg><svg class="px"><use href="#px"/></svg></div>
<div class="c" style="left:751px;top:216px"><svg class="sc"><use href="#sc"/></svg><svg class="px"><use href="#px"/></svg></div>
<div class="c" style="left:805px;top:216px"><svg class="sc"><use href="#sc"/></svg><svg class="px"><use href="#px"/></svg></div>
<div class="c" style="left:859px;top:216px"><svg class="sc"><use href="#sc"/></svg><svg class="px"><use href="#px"/></svg></div>
<div class="c" style="left:913px;top:216px"><svg class="sc"><use href="#sc"/></svg><svg class="px"><use href="#px"/></svg></div>
<div class="c" style="left:967px;top:216px"><svg class="sc"><use href="#sc"/></svg><svg class="px"><use href="#px"/></svg></div>
<div class="c" style="left:1021px;top:216px"><svg class="sc"><use href="#sc"/></svg><svg class="px"><use href="#px"/></svg></div>
<div class="c" style="left:1075px;top:216px"><svg class="sc"><use href="#sc"/></svg><svg class="px"><use href="#px"/></svg></div>
<div class="c" style="left:1129px;top:216px"><svg class="sc"><use href="#sc"/></svg><svg class="px"><use href="#px"/></svg></div>
<div class="c" style="left:1183px;top:216px"><svg class="sc"><use href="#sc"/></svg><svg class="px"><use href="#px"/></svg></div>
<div class="rc" style="left:32px;top:242px;width:176px"><span class="k">テーブル</span>一覧<span class="d">・</span>編集</div>
<div class="ac" style="left:210px;top:242px">実行<svg class="gt" viewBox="0 0 8 12"><path d="M1 1 L6 6 L1 11"/></svg></div>
<div class="c" style="left:319px;top:242px"><svg class="sc"><use href="#sc"/></svg><svg class="px"><use href="#px"/></svg></div>
<div class="c" style="left:373px;top:242px"><svg class="sc"><use href="#sc"/></svg><svg class="px"><use href="#px"/></svg></div>
<div class="c" style="left:427px;top:242px"><svg class="sc"><use href="#sc"/></svg><svg class="px"><use href="#px"/></svg></div>
<div class="c" style="left:481px;top:242px"><svg class="sc"><use href="#sc"/></svg><svg class="px"><use href="#px"/></svg></div>
<div class="c" style="left:535px;top:242px"><svg class="mk"><use href="#ok"/></svg></div>
<div class="c" style="left:589px;top:242px"><svg class="sc"><use href="#sc"/></svg><svg class="px"><use href="#px"/></svg></div>
<div class="c" style="left:643px;top:242px"><svg class="sc"><use href="#sc"/></svg><svg class="px"><use href="#px"/></svg></div>
<div class="c" style="left:697px;top:242px"><svg class="sc"><use href="#sc"/></svg><svg class="px"><use href="#px"/></svg></div>
<div class="c" style="left:751px;top:242px"><svg class="sc"><use href="#sc"/></svg><svg class="px"><use href="#px"/></svg></div>
<div class="c" style="left:805px;top:242px"><svg class="sc"><use href="#sc"/></svg><svg class="px"><use href="#px"/></svg></div>
<div class="c" style="left:859px;top:242px"><svg class="sc"><use href="#sc"/></svg><svg class="px"><use href="#px"/></svg></div>
<div class="c" style="left:913px;top:242px"><svg class="sc"><use href="#sc"/></svg><svg class="px"><use href="#px"/></svg></div>
<div class="c" style="left:967px;top:242px"><svg class="sc"><use href="#sc"/></svg><svg class="px"><use href="#px"/></svg></div>
<div class="c" style="left:1021px;top:242px"><svg class="sc"><use href="#sc"/></svg><svg class="px"><use href="#px"/></svg></div>
<div class="c" style="left:1075px;top:242px"><svg class="sc"><use href="#sc"/></svg><svg class="px"><use href="#px"/></svg></div>
<div class="c" style="left:1129px;top:242px"><svg class="sc"><use href="#sc"/></svg><svg class="px"><use href="#px"/></svg></div>
<div class="c" style="left:1183px;top:242px"><svg class="sc"><use href="#sc"/></svg><svg class="px"><use href="#px"/></svg></div>
<div class="rc" style="left:32px;top:268px;width:176px"><span class="k">テーブル</span><span class="d">・</span><span class="k">エクスポート</span></div>
<div class="ac" style="left:210px;top:268px">実行<svg class="gt" viewBox="0 0 8 12"><path d="M1 1 L6 6 L1 11"/></svg></div>
<div class="c" style="left:319px;top:268px"><svg class="sc"><use href="#sc"/></svg><svg class="px"><use href="#px"/></svg></div>
<div class="c" style="left:373px;top:268px"><svg class="sc"><use href="#sc"/></svg><svg class="px"><use href="#px"/></svg></div>
<div class="c" style="left:427px;top:268px"><svg class="sc"><use href="#sc"/></svg><svg class="px"><use href="#px"/></svg></div>
<div class="c" style="left:481px;top:268px"><svg class="sc"><use href="#sc"/></svg><svg class="px"><use href="#px"/></svg></div>
<div class="c" style="left:535px;top:268px"><svg class="mk"><use href="#ok"/></svg></div>
<div class="c" style="left:589px;top:268px"><svg class="sc"><use href="#sc"/></svg><svg class="px"><use href="#px"/></svg></div>
<div class="c" style="left:643px;top:268px"><svg class="sc"><use href="#sc"/></svg><svg class="px"><use href="#px"/></svg></div>
<div class="c" style="left:697px;top:268px"><svg class="sc"><use href="#sc"/></svg><svg class="px"><use href="#px"/></svg></div>
<div class="c" style="left:751px;top:268px"><svg class="sc"><use href="#sc"/></svg><svg class="px"><use href="#px"/></svg></div>
<div class="c" style="left:805px;top:268px"><svg class="sc"><use href="#sc"/></svg><svg class="px"><use href="#px"/></svg></div>
<div class="c" style="left:859px;top:268px"><svg class="sc"><use href="#sc"/></svg><svg class="px"><use href="#px"/></svg></div>
<div class="c" style="left:913px;top:268px"><svg class="sc"><use href="#sc"/></svg><svg class="px"><use href="#px"/></svg></div>
<div class="c" style="left:967px;top:268px"><svg class="sc"><use href="#sc"/></svg><svg class="px"><use href="#px"/></svg></div>
<div class="c" style="left:1021px;top:268px"><svg class="sc"><use href="#sc"/></svg><svg class="px"><use href="#px"/></svg></div>
<div class="c" style="left:1075px;top:268px"><svg class="sc"><use href="#sc"/></svg><svg class="px"><use href="#px"/></svg></div>
<div class="c" style="left:1129px;top:268px"><svg class="sc"><use href="#sc"/></svg><svg class="px"><use href="#px"/></svg></div>
<div class="c" style="left:1183px;top:268px"><svg class="sc"><use href="#sc"/></svg><svg class="px"><use href="#px"/></svg></div>
<div class="rc" style="left:32px;top:294px;width:176px"><span class="k">テーブル</span><span class="d">・</span><span class="k">インポート</span></div>
<div class="ac" style="left:210px;top:294px">実行<svg class="gt" viewBox="0 0 8 12"><path d="M1 1 L6 6 L1 11"/></svg></div>
<div class="c" style="left:319px;top:294px"><svg class="sc"><use href="#sc"/></svg><svg class="px"><use href="#px"/></svg></div>
<div class="c" style="left:373px;top:294px"><svg class="sc"><use href="#sc"/></svg><svg class="px"><use href="#px"/></svg></div>
<div class="c" style="left:427px;top:294px"><svg class="sc"><use href="#sc"/></svg><svg class="px"><use href="#px"/></svg></div>
<div class="c" style="left:481px;top:294px"><svg class="sc"><use href="#sc"/></svg><svg class="px"><use href="#px"/></svg></div>
<div class="c" style="left:535px;top:294px"><svg class="mk"><use href="#ok"/></svg></div>
<div class="c" style="left:589px;top:294px"><svg class="sc"><use href="#sc"/></svg><svg class="px"><use href="#px"/></svg></div>
<div class="c" style="left:643px;top:294px"><svg class="sc"><use href="#sc"/></svg><svg class="px"><use href="#px"/></svg></div>
<div class="c" style="left:697px;top:294px"><svg class="sc"><use href="#sc"/></svg><svg class="px"><use href="#px"/></svg></div>
<div class="c" style="left:751px;top:294px"><svg class="sc"><use href="#sc"/></svg><svg class="px"><use href="#px"/></svg></div>
<div class="c" style="left:805px;top:294px"><svg class="sc"><use href="#sc"/></svg><svg class="px"><use href="#px"/></svg></div>
<div class="c" style="left:859px;top:294px"><svg class="sc"><use href="#sc"/></svg><svg class="px"><use href="#px"/></svg></div>
<div class="c" style="left:913px;top:294px"><svg class="sc"><use href="#sc"/></svg><svg class="px"><use href="#px"/></svg></div>
<div class="c" style="left:967px;top:294px"><svg class="sc"><use href="#sc"/></svg><svg class="px"><use href="#px"/></svg></div>
<div class="c" style="left:1021px;top:294px"><svg class="sc"><use href="#sc"/></svg><svg class="px"><use href="#px"/></svg></div>
<div class="c" style="left:1075px;top:294px"><svg class="sc"><use href="#sc"/></svg><svg class="px"><use href="#px"/></svg></div>
<div class="c" style="left:1129px;top:294px"><svg class="sc"><use href="#sc"/></svg><svg class="px"><use href="#px"/></svg></div>
<div class="c" style="left:1183px;top:294px"><svg class="sc"><use href="#sc"/></svg><svg class="px"><use href="#px"/></svg></div>
<div class="rc" style="left:32px;top:320px;width:176px"><span class="k">テーブル</span>一覧<span class="d">・</span>一般<span class="k">ユーザ</span>向<span class="k">け</span></div>
<div class="ac" style="left:210px;top:320px">実行<svg class="gt" viewBox="0 0 8 12"><path d="M1 1 L6 6 L1 11"/></svg></div>
<div class="c" style="left:319px;top:320px"><svg class="sc"><use href="#sc"/></svg><svg class="px"><use href="#px"/></svg></div>
<div class="c" style="left:373px;top:320px"><svg class="sc"><use href="#sc"/></svg><svg class="px"><use href="#px"/></svg></div>
<div class="c" style="left:427px;top:320px"><svg class="sc"><use href="#sc"/></svg><svg class="px"><use href="#px"/></svg></div>
<div class="c" style="left:481px;top:320px"><svg class="sc"><use href="#sc"/></svg><svg class="px"><use href="#px"/></svg></div>
<div class="c" style="left:535px;top:320px"><svg class="sc"><use href="#sc"/></svg><svg class="px"><use href="#px"/></svg></div>
<div class="c" style="left:589px;top:320px"><svg class="sc"><use href="#sc"/></svg><svg class="px"><use href="#px"/></svg></div>
<div class="c" style="left:643px;top:320px"><svg class="sc"><use href="#sc"/></svg><svg class="px"><use href="#px"/></svg></div>
<div class="c" style="left:697px;top:320px"><svg class="sc"><use href="#sc"/></svg><svg class="px"><use href="#px"/></svg></div>
<div class="c" style="left:751px;top:320px"><svg class="sc"><use href="#sc"/></svg><svg class="px"><use href="#px"/></svg></div>
<div class="c" style="left:805px;top:320px"><svg class="sc"><use href="#sc"/></svg><svg class="px"><use href="#px"/></svg></div>
<div class="c" style="left:859px;top:320px"><svg class="sc"><use href="#sc"/></svg><svg class="px"><use href="#px"/></svg></div>
<div class="c" style="left:913px;top:320px"><svg class="sc"><use href="#sc"/></svg><svg class="px"><use href="#px"/></svg></div>
<div class="c" style="left:967px;top:320px"><svg class="sc"><use href="#sc"/></svg><svg class="px"><use href="#px"/></svg></div>
<div class="c" style="left:1021px;top:320px"><svg class="sc"><use href="#sc"/></svg><svg class="px"><use href="#px"/></svg></div>
<div class="c" style="left:1075px;top:320px"><svg class="sc"><use href="#sc"/></svg><svg class="px"><use href="#px"/></svg></div>
<div class="c" style="left:1129px;top:320px"><svg class="sc"><use href="#sc"/></svg><svg class="px"><use href="#px"/></svg></div>
<div class="c" style="left:1183px;top:320px"><svg class="sc"><use href="#sc"/></svg><svg class="px"><use href="#px"/></svg></div>
<div class="rc" style="left:32px;top:346px;width:176px"><span class="k">テーブル</span>単位<span class="k">の</span>閲覧<span class="d">・</span>編集</div>
<div class="ac" style="left:210px;top:346px">実行<svg class="gt" viewBox="0 0 8 12"><path d="M1 1 L6 6 L1 11"/></svg></div>
<div class="c" style="left:319px;top:346px"><svg class="sc"><use href="#sc"/></svg><svg class="px"><use href="#px"/></svg></div>
<div class="c" style="left:373px;top:346px"><svg class="sc"><use href="#sc"/></svg><svg class="px"><use href="#px"/></svg></div>
<div class="c" style="left:427px;top:346px"><svg class="sc"><use href="#sc"/></svg><svg class="px"><use href="#px"/></svg></div>
<div class="c" style="left:481px;top:346px"><svg class="sc"><use href="#sc"/></svg><svg class="px"><use href="#px"/></svg></div>
<div class="c" style="left:535px;top:346px"><svg class="sc"><use href="#sc"/></svg><svg class="px"><use href="#px"/></svg></div>
<div class="c" style="left:589px;top:346px"><svg class="sc"><use href="#sc"/></svg><svg class="px"><use href="#px"/></svg></div>
<div class="c" style="left:643px;top:346px"><svg class="sc"><use href="#sc"/></svg><svg class="px"><use href="#px"/></svg></div>
<div class="c" style="left:697px;top:346px"><svg class="sc"><use href="#sc"/></svg><svg class="px"><use href="#px"/></svg></div>
<div class="c" style="left:751px;top:346px"><svg class="sc"><use href="#sc"/></svg><svg class="px"><use href="#px"/></svg></div>
<div class="c" style="left:805px;top:346px"><svg class="sc"><use href="#sc"/></svg><svg class="px"><use href="#px"/></svg></div>
<div class="c" style="left:859px;top:346px"><svg class="sc"><use href="#sc"/></svg><svg class="px"><use href="#px"/></svg></div>
<div class="c" style="left:913px;top:346px"><svg class="sc"><use href="#sc"/></svg><svg class="px"><use href="#px"/></svg></div>
<div class="c" style="left:967px;top:346px"><svg class="sc"><use href="#sc"/></svg><svg class="px"><use href="#px"/></svg></div>
<div class="c" style="left:1021px;top:346px"><svg class="sc"><use href="#sc"/></svg><svg class="px"><use href="#px"/></svg></div>
<div class="c" style="left:1075px;top:346px"><svg class="sc"><use href="#sc"/></svg><svg class="px"><use href="#px"/></svg></div>
<div class="c" style="left:1129px;top:346px"><svg class="sc"><use href="#sc"/></svg><svg class="px"><use href="#px"/></svg></div>
<div class="c" style="left:1183px;top:346px"><svg class="sc"><use href="#sc"/></svg><svg class="px"><use href="#px"/></svg></div>
<div class="rc" style="left:17px;top:372px;width:191px"><span class="k">ロール</span>管理</div>
<div class="ac" style="left:210px;top:372px">実行<svg class="gt" viewBox="0 0 8 12"><path d="M1 1 L6 6 L1 11"/></svg></div>
<div class="c" style="left:319px;top:372px"><svg class="sc"><use href="#sc"/></svg><svg class="px"><use href="#px"/></svg></div>
<div class="c" style="left:373px;top:372px"><svg class="sc"><use href="#sc"/></svg><svg class="px"><use href="#px"/></svg></div>
<div class="c" style="left:427px;top:372px"><svg class="sc"><use href="#sc"/></svg><svg class="px"><use href="#px"/></svg></div>
<div class="c" style="left:481px;top:372px"><svg class="sc"><use href="#sc"/></svg><svg class="px"><use href="#px"/></svg></div>
<div class="c" style="left:535px;top:372px"><svg class="sc"><use href="#sc"/></svg><svg class="px"><use href="#px"/></svg></div>
<div class="c" style="left:589px;top:372px"><svg class="sc"><use href="#sc"/></svg><svg class="px"><use href="#px"/></svg></div>
<div class="c" style="left:643px;top:372px"><svg class="sc"><use href="#sc"/></svg><svg class="px"><use href="#px"/></svg></div>
<div class="c" style="left:697px;top:372px"><svg class="sc"><use href="#sc"/></svg><svg class="px"><use href="#px"/></svg></div>
<div class="c" style="left:751px;top:372px"><svg class="sc"><use href="#sc"/></svg><svg class="px"><use href="#px"/></svg></div>
<div class="c" style="left:805px;top:372px"><svg class="sc"><use href="#sc"/></svg><svg class="px"><use href="#px"/></svg></div>
<div class="c" style="left:859px;top:372px"><svg class="sc"><use href="#sc"/></svg><svg class="px"><use href="#px"/></svg></div>
<div class="c" style="left:913px;top:372px"><svg class="sc"><use href="#sc"/></svg><svg class="px"><use href="#px"/></svg></div>
<div class="c" style="left:967px;top:372px"><svg class="sc"><use href="#sc"/></svg><svg class="px"><use href="#px"/></svg></div>
<div class="c" style="left:1021px;top:372px"><svg class="sc"><use href="#sc"/></svg><svg class="px"><use href="#px"/></svg></div>
<div class="c" style="left:1075px;top:372px"><svg class="sc"><use href="#sc"/></svg><svg class="px"><use href="#px"/></svg></div>
<div class="c" style="left:1129px;top:372px"><svg class="sc"><use href="#sc"/></svg><svg class="px"><use href="#px"/></svg></div>
<div class="c" style="left:1183px;top:372px"><svg class="sc"><use href="#sc"/></svg><svg class="px"><use href="#px"/></svg></div>
<div class="rc" style="left:32px;top:398px;width:176px"><span class="k">ロール</span>別<span class="k">ユーザコード</span>一覧</div>
<div class="ac" style="left:210px;top:398px">実行<svg class="gt" viewBox="0 0 8 12"><path d="M1 1 L6 6 L1 11"/></svg></div>
<div class="c" style="left:319px;top:398px"><svg class="sc"><use href="#sc"/></svg><svg class="px"><use href="#px"/></svg></div>
<div class="c" style="left:373px;top:398px"><svg class="sc"><use href="#sc"/></svg><svg class="px"><use href="#px"/></svg></div>
<div class="c" style="left:427px;top:398px"><svg class="sc"><use href="#sc"/></svg><svg class="px"><use href="#px"/></svg></div>
<div class="c" style="left:481px;top:398px"><svg class="sc"><use href="#sc"/></svg><svg class="px"><use href="#px"/></svg></div>
<div class="c" style="left:535px;top:398px"><svg class="mk"><use href="#ok"/></svg></div>
<div class="c" style="left:589px;top:398px"><svg class="sc"><use href="#sc"/></svg><svg class="px"><use href="#px"/></svg></div>
<div class="c" style="left:643px;top:398px"><svg class="sc"><use href="#sc"/></svg><svg class="px"><use href="#px"/></svg></div>
<div class="c" style="left:697px;top:398px"><svg class="sc"><use href="#sc"/></svg><svg class="px"><use href="#px"/></svg></div>
<div class="c" style="left:751px;top:398px"><svg class="sc"><use href="#sc"/></svg><svg class="px"><use href="#px"/></svg></div>
<div class="c" style="left:805px;top:398px"><svg class="sc"><use href="#sc"/></svg><svg class="px"><use href="#px"/></svg></div>
<div class="c" style="left:859px;top:398px"><svg class="sc"><use href="#sc"/></svg><svg class="px"><use href="#px"/></svg></div>
<div class="c" style="left:913px;top:398px"><svg class="mk"><use href="#ok"/></svg></div>
<div class="c" style="left:967px;top:398px"><svg class="sc"><use href="#sc"/></svg><svg class="px"><use href="#px"/></svg></div>
<div class="c" style="left:1021px;top:398px"><svg class="sc"><use href="#sc"/></svg><svg class="px"><use href="#px"/></svg></div>
<div class="c" style="left:1075px;top:398px"><svg class="sc"><use href="#sc"/></svg><svg class="px"><use href="#px"/></svg></div>
<div class="c" style="left:1129px;top:398px"><svg class="sc"><use href="#sc"/></svg><svg class="px"><use href="#px"/></svg></div>
<div class="c" style="left:1183px;top:398px"><svg class="sc"><use href="#sc"/></svg><svg class="px"><use href="#px"/></svg></div>
<div class="rc" style="left:32px;top:424px;width:176px"><span class="k">ロール</span>編集</div>
<div class="ac" style="left:210px;top:424px">実行<svg class="gt" viewBox="0 0 8 12"><path d="M1 1 L6 6 L1 11"/></svg></div>
<div class="c" style="left:319px;top:424px"><svg class="sc"><use href="#sc"/></svg><svg class="px"><use href="#px"/></svg></div>
<div class="c" style="left:373px;top:424px"><svg class="sc"><use href="#sc"/></svg><svg class="px"><use href="#px"/></svg></div>
<div class="c" style="left:427px;top:424px"><svg class="sc"><use href="#sc"/></svg><svg class="px"><use href="#px"/></svg></div>
<div class="c" style="left:481px;top:424px"><svg class="sc"><use href="#sc"/></svg><svg class="px"><use href="#px"/></svg></div>
<div class="c" style="left:535px;top:424px"><svg class="mk"><use href="#ok"/></svg></div>
<div class="c" style="left:589px;top:424px"><svg class="sc"><use href="#sc"/></svg><svg class="px"><use href="#px"/></svg></div>
<div class="c" style="left:643px;top:424px"><svg class="sc"><use href="#sc"/></svg><svg class="px"><use href="#px"/></svg></div>
<div class="c" style="left:697px;top:424px"><svg class="sc"><use href="#sc"/></svg><svg class="px"><use href="#px"/></svg></div>
<div class="c" style="left:751px;top:424px"><svg class="sc"><use href="#sc"/></svg><svg class="px"><use href="#px"/></svg></div>
<div class="c" style="left:805px;top:424px"><svg class="sc"><use href="#sc"/></svg><svg class="px"><use href="#px"/></svg></div>
<div class="c" style="left:859px;top:424px"><svg class="sc"><use href="#sc"/></svg><svg class="px"><use href="#px"/></svg></div>
<div class="c" style="left:913px;top:424px"><svg class="mk"><use href="#ok"/></svg></div>
<div class="c" style="left:967px;top:424px"><svg class="sc"><use href="#sc"/></svg><svg class="px"><use href="#px"/></svg></div>
<div class="c" style="left:1021px;top:424px"><svg class="sc"><use href="#sc"/></svg><svg class="px"><use href="#px"/></svg></div>
<div class="c" style="left:1075px;top:424px"><svg class="sc"><use href="#sc"/></svg><svg class="px"><use href="#px"/></svg></div>
<div class="c" style="left:1129px;top:424px"><svg class="sc"><use href="#sc"/></svg><svg class="px"><use href="#px"/></svg></div>
<div class="c" style="left:1183px;top:424px"><svg class="sc"><use href="#sc"/></svg><svg class="px"><use href="#px"/></svg></div>
<div class="rc" style="left:32px;top:450px;width:176px"><span class="k">ロール</span>一覧</div>
<div class="ac" style="left:210px;top:450px">実行<svg class="gt" viewBox="0 0 8 12"><path d="M1 1 L6 6 L1 11"/></svg></div>
<div class="c" style="left:319px;top:450px"><svg class="sc"><use href="#sc"/></svg><svg class="px"><use href="#px"/></svg></div>
<div class="c" style="left:373px;top:450px"><svg class="sc"><use href="#sc"/></svg><svg class="px"><use href="#px"/></svg></div>
<div class="c" style="left:427px;top:450px"><svg class="sc"><use href="#sc"/></svg><svg class="px"><use href="#px"/></svg></div>
<div class="c" style="left:481px;top:450px"><svg class="sc"><use href="#sc"/></svg><svg class="px"><use href="#px"/></svg></div>
<div class="c" style="left:535px;top:450px"><svg class="mk"><use href="#ok"/></svg></div>
<div class="c" style="left:589px;top:450px"><svg class="sc"><use href="#sc"/></svg><svg class="px"><use href="#px"/></svg></div>
<div class="c" style="left:643px;top:450px"><svg class="sc"><use href="#sc"/></svg><svg class="px"><use href="#px"/></svg></div>
<div class="c" style="left:697px;top:450px"><svg class="sc"><use href="#sc"/></svg><svg class="px"><use href="#px"/></svg></div>
<div class="c" style="left:751px;top:450px"><svg class="sc"><use href="#sc"/></svg><svg class="px"><use href="#px"/></svg></div>
<div class="c" style="left:805px;top:450px"><svg class="sc"><use href="#sc"/></svg><svg class="px"><use href="#px"/></svg></div>
<div class="c" style="left:859px;top:450px"><svg class="sc"><use href="#sc"/></svg><svg class="px"><use href="#px"/></svg></div>
<div class="c" style="left:913px;top:450px"><svg class="mk"><use href="#ok"/></svg></div>
<div class="c" style="left:967px;top:450px"><svg class="sc"><use href="#sc"/></svg><svg class="px"><use href="#px"/></svg></div>
<div class="c" style="left:1021px;top:450px"><svg class="sc"><use href="#sc"/></svg><svg class="px"><use href="#px"/></svg></div>
<div class="c" style="left:1075px;top:450px"><svg class="sc"><use href="#sc"/></svg><svg class="px"><use href="#px"/></svg></div>
<div class="c" style="left:1129px;top:450px"><svg class="sc"><use href="#sc"/></svg><svg class="px"><use href="#px"/></svg></div>
<div class="c" style="left:1183px;top:450px"><svg class="sc"><use href="#sc"/></svg><svg class="px"><use href="#px"/></svg></div>
</div>
<div id="vsb"><svg class="up" viewBox="0 0 8 5"><path d="M0.5 4.5 L4 1 L7.5 4.5" /></svg><div class="thumb"><div class="gr"></div></div></div>
<div id="hsb"><svg class="lf" viewBox="0 0 5 8"><path d="M4.5 0.5 L0.8 4 L4.5 7.5 Z"/></svg><div class="thumb"><div class="gr"></div></div></div>
<div id="csb"><svg viewBox="0 0 10 10"><path d="M1 3 L9 5 L1 7 L3 5 Z M3 0.5 L4 5 L3 9.5 L3.6 5 Z"/></svg></div>
</div>
<div id="redbox"></div>
</div>
</body></html>
